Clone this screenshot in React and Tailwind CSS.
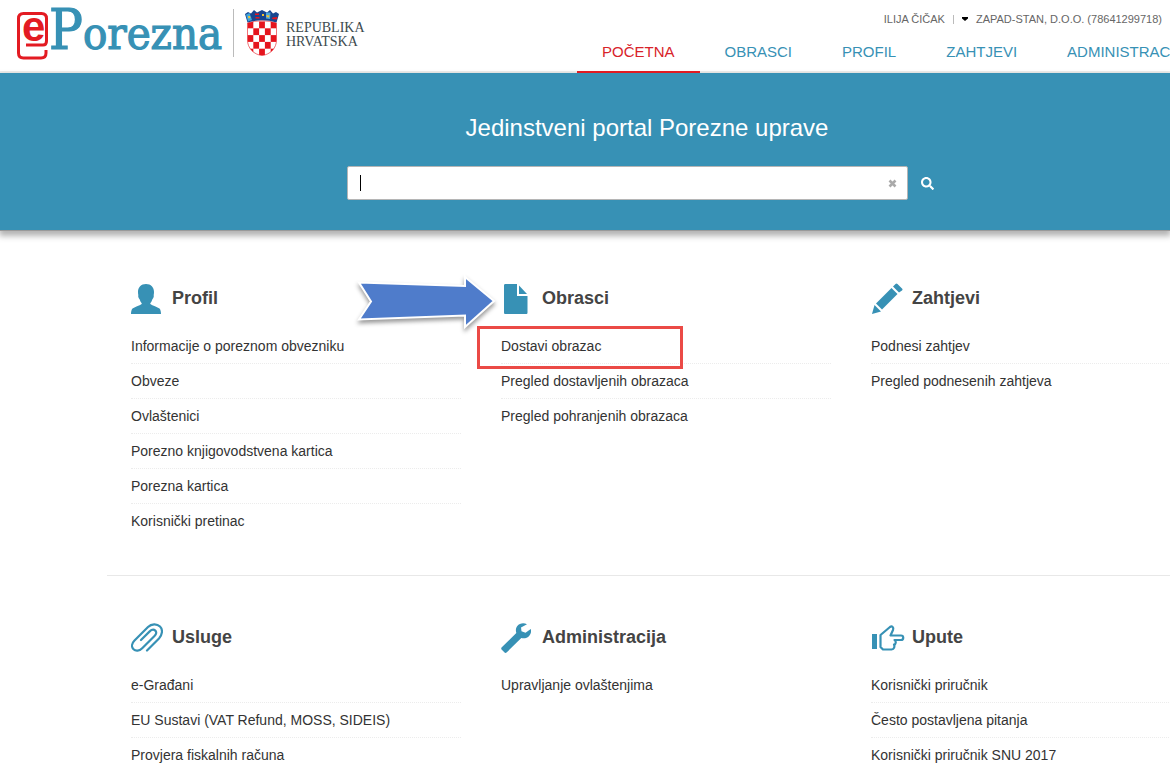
import { FaSearch } from "react-icons/fa";

const NAV = ["POČETNA", "OBRASCI", "PROFIL", "ZAHTJEVI", "ADMINISTRACIJA"];

function ProfileIcon() {
  return (
    <svg viewBox="0 0 30 30" className="h-[30px] w-[30px]" fill="currentColor" aria-hidden="true">
      <path d="M15 0c-5 0-8 3.400-8 8 0 1 .1 2 .3 3-.4 2 .5 3.500 1.300 4.200.6 2 1.400 3.200 2.100 4v.8C8.500 21.500 3.500 23 1.500 24.500.4 25.500 0 28 0 30h30c0-2-.4-4.500-1.500-5.500-2-1.500-7-3-9.200-4.500v-.8c.7-.8 1.500-2 2.100-4 .8-.7 1.700-2.200 1.300-4.200.2-1 .3-2 .3-3 0-4.600-3-8-8-8z" />
    </svg>
  );
}

function FileIcon() {
  return (
    <svg viewBox="0 0 30 30" className="h-[30px] w-[30px]" fill="currentColor" aria-hidden="true">
      <path d="M4.500 0H16v12h10.500v16.500c0 1-.5 1.500-1.500 1.500H4.500c-1 0-1.500-.5-1.500-1.500v-27C3 .5 3.500 0 4.500 0z" />
      <path d="M18 1.500v8.500h8z" />
    </svg>
  );
}

function PencilIcon() {
  return (
    <svg viewBox="0 0 32 32" className="h-8 w-8" fill="currentColor" aria-hidden="true">
      <path d="M1 31l2.500-9 6.500 6.500z" />
      <path d="M5 20.500L20.500 5l6 6L11 26.500z" />
      <path d="M22 3.500L24.500 1c.7-.7 1.300-.7 2 0l4.500 4.500c.7.700.7 1.300 0 2L28 9.500z" />
    </svg>
  );
}

function ClipIcon() {
  return (
    <svg viewBox="0 0 32 32" className="h-8 w-8" fill="none" stroke="currentColor" strokeWidth="2.200" strokeLinecap="round" strokeLinejoin="round" aria-hidden="true">
      <path d="M16 28.500L28 16.500C31.500 12.500 32 7.500 29 4.500S20.500 1.500 17 5L3.500 18.500c-3 3-3.200 6.500-1 8.700s5.700 2 8.700-1L23.500 14c2-2 2.200-4 .8-5.400s-3.600-1.200-5.600.8L10 18" />
    </svg>
  );
}

function WrenchIcon() {
  return (
    <svg viewBox="0 0 30 30" className="h-[30px] w-[30px]" fill="currentColor" aria-hidden="true">
      <path d="M26 1.200C22.500-.6 18.500.2 16.300 3c-1.500 2-1.800 4.500-1 6.900L.8 24.300c-.8.800-.8 1.700 0 2.500l2.500 2.500c.8.800 1.700.8 2.500 0L20.300 15c3 .8 6 0 8-2.300 1.700-2 2.200-4.500 1.500-6.700l-5.300 3.800-4-1.500-.5-3.800z" />
    </svg>
  );
}

function HandIcon() {
  return (
    <svg viewBox="0 0 34 28" className="h-7 w-[34px]" fill="none" stroke="currentColor" strokeWidth="2.200" strokeLinejoin="round" aria-hidden="true">
      <path d="M1 10h5v15H1z" fill="currentColor" stroke="none" />
      <path d="M9.500 11L19 3c2-1.500 4 .5 3 3L19.500 11.500H30c3 0 3 4.500 0 4.500h-6.500c2 1 1.500 4.500-.5 4.700 1 1.500.3 4.500-2.500 4.800H12L9.500 23z" />
    </svg>
  );
}

const SECTIONS = [
  [
    {
      title: "Profil",
      Icon: ProfileIcon,
      items: ["Informacije o poreznom obvezniku", "Obveze", "Ovlaštenici", "Porezno knjigovodstvena kartica", "Porezna kartica", "Korisnički pretinac"],
    },
    {
      title: "Obrasci",
      Icon: FileIcon,
      marked: true,
      items: ["Dostavi obrazac", "Pregled dostavljenih obrazaca", "Pregled pohranjenih obrazaca"],
    },
    { title: "Zahtjevi", Icon: PencilIcon, items: ["Podnesi zahtjev", "Pregled podnesenih zahtjeva"] },
  ],
  [
    { title: "Usluge", Icon: ClipIcon, items: ["e-Građani", "EU Sustavi (VAT Refund, MOSS, SIDEIS)", "Provjera fiskalnih računa"] },
    { title: "Administracija", Icon: WrenchIcon, items: ["Upravljanje ovlaštenjima"] },
    { title: "Upute", Icon: HandIcon, items: ["Korisnički priručnik", "Često postavljena pitanja", "Korisnički priručnik SNU 2017"] },
  ],
];

function Logo() {
  return (
    <a href="#" aria-label="ePorezna" className="block">
      <svg viewBox="0 0 206 60" className="h-[60px] w-[206px] overflow-visible">
        <path d="M10 45h17c2.500 0 3.500-1.500 3.500-4V18.500c0-3.500-1.700-5-5-5h-18c-3.300 0-5 1.500-5 5V53c0 3.500 1.700 5 5 5h17.500c3.300 0 5-1.500 5-5v-3" fill="none" stroke="#e31b22" strokeWidth="3" />
        <text x="6" y="41" fontSize="42" fontWeight="bold" fill="#e31b22" fontFamily="Liberation Sans Narrow, Liberation Sans, sans-serif">e</text>
        <text x="33" y="49" fill="#3791b5" stroke="#3791b5" strokeWidth="1.200" fontFamily="DejaVu Serif Condensed, DejaVu Serif, serif" fontSize="56">
          P<tspan fontSize="45">orezna</tspan>
        </text>
      </svg>
    </a>
  );
}

function CoatOfArms() {
  const cells = [];
  for (let r = 0; r < 5; r++) for (let c = 0; c < 5; c++) if ((r + c) % 2 === 0) cells.push([c, r]);
  return (
    <svg viewBox="0 0 36 48" className="h-12 w-9" aria-hidden="true">
      <clipPath id="shield">
        <path d="M3.500 14Q18 9.500 32.500 14V31c0 8-6 14.500-14.500 15.500C9.500 45.500 3.500 39 3.500 31z" />
      </clipPath>
      <g clipPath="url(#shield)">
        <path d="M0 9h36v39H0z" fill="#fff" />
        {cells.map(([c, r]) => (
          <rect key={`${c}-${r}`} x={3.5 + c * 5.8} y={12.5 + r * 6.800} width="5.800" height="6.800" fill="#e5141d" />
        ))}
      </g>
      <path d="M3.500 14Q18 9.500 32.500 14V31c0 8-6 14.500-14.500 15.500C9.500 45.500 3.500 39 3.500 31z" fill="none" stroke="#e5141d" strokeWidth=".6" />
      <path d="M3.500 13.500L1 5l3-2 3 1.500L10 1l3 2.500L18 1l5 2.500L26 1l3 3.500L32 3l3 2-2.500 8.500Q18 9 3.500 13.500z" fill="#17458f" />
      <path d="M2 5.500l3.500-1.500 2.500 7-4 1.500z" fill="#3ca4dc" />
      <path d="M11 4.500h4v1.500h-4zM11.500 8h4v1.500h-4z" fill="#e5141d" />
      <path d="M22 3.500h4.500l-.5 6.500-4-.6z" fill="#4aa7dc" />
      <path d="M18 5h2v2h-2zM22.500 6l3 .5-.5 2-2.500-.5zM4 7l2 0 .5 2-2 .5z" fill="#f2c230" />
      <path d="M28.500 8.500l5-.5-1 2.500-4.500-.5z" fill="#e5141d" />
    </svg>
  );
}

function ArrowCallout() {
  return (
    <svg viewBox="0 0 146 64" className="pointer-events-none absolute -left-[148px] -top-3 h-16 w-[146px] overflow-visible drop-shadow-[0_3px_2px_rgba(0,0,0,0.4)]" aria-hidden="true">
      <path d="M6 12.500L112 16V7l29 24-29 26V45.500L6 49.500l12-18z" fill="#4f7ccb" stroke="#fff" strokeWidth="2" />
    </svg>
  );
}

function Section({ title, Icon, items, marked }) {
  return (
    <section className="relative w-[330px] shrink-0">
      <div className="relative flex h-8 items-center">
        <span className="flex w-[41px] shrink-0 items-center pt-px text-[#3791b5]"><Icon /></span>
        <h2 className="text-lg font-bold leading-6 text-[#444]">{title}</h2>
        {marked && <ArrowCallout />}
      </div>
      <ul className="pt-[15px]">
        {items.map((t, i) => (
          <li key={t} className="relative border-b border-dotted border-[#ececec] last:border-transparent">
            <a href="#" className="block py-[7px] text-sm leading-5 text-[#333]">{t}</a>
            {marked && i === 0 && <span className="pointer-events-none absolute -left-6 -top-[3px] h-[43px] w-[206px] border-3 border-[#eb4a46]" />}
          </li>
        ))}
      </ul>
    </section>
  );
}

export default function App() {
  return (
    <div className="min-h-screen overflow-hidden bg-white font-['Liberation_Sans',Arial,sans-serif]">
      <header className="flex justify-between border-b-2 border-[#ededeb]">
        <div className="flex h-[71px] shrink-0 pl-4">
          <Logo />
          <div className="ml-[11px] mt-[9px] h-12 w-px bg-[#bbb]" />
          <div className="ml-[10px] mt-[9px]"><CoatOfArms /></div>
          <p className="ml-[6px] mt-[21px] font-['Liberation_Serif',serif] text-sm leading-[14px] text-[#3c4a4e]">REPUBLIKA<br />HRVATSKA</p>
        </div>
        <div className="flex w-[593px] shrink-0 flex-col">
          <div className="flex h-8 items-center justify-end gap-2 pr-2 pt-[6px] text-[11px] text-[#666]">
            <span>ILIJA ČIČAK</span>
            <span className="h-[9px] w-px bg-[#bbb]" />
            <button type="button" className="flex items-center gap-2">
              <svg viewBox="0 0 6 4" className="h-1 w-[6px]" aria-hidden="true"><path d="M0 0h6v1.500L3 4 0 1.500z" fill="#000" /></svg>
              ZAPAD-STAN, D.O.O. (78641299718)
            </button>
          </div>
          <nav className="relative z-10 -mb-[2px] flex h-[41px]">
            {NAV.map((n, i) => (
              <a key={n} href="#" className={i === 0 ? "shrink-0 border-b-2 border-[#e01b22] px-[25px] pt-2 text-[15px] leading-6 text-[#d8232a]" : "shrink-0 px-[25px] pt-2 text-[15px] leading-6 text-[#3791b5]"}>{n}</a>
            ))}
          </nav>
        </div>
      </header>

      <div className="flex h-[158px] flex-col items-center border-b border-[#999] bg-[#3791b5] pl-[124px] pt-[39px] shadow-[0_4px_6px_1px_rgba(0,0,0,0.3)]">
        <h1 className="text-2xl leading-8 text-white">Jedinstveni portal Porezne uprave</h1>
        <form className="mr-[14px] mt-[22px] flex items-center">
          <div className="relative">
            <input aria-label="Pretraživanje" type="text" className="block h-[34px] w-[561px] rounded-xs border border-[#b5b5b5] bg-white px-3 text-base caret-black outline-none" />
            <span className="pointer-events-none absolute left-[13px] top-[9px] h-4 w-px bg-black" />
            <button type="reset" aria-label="Obriši" className="absolute right-[11px] top-[13px] text-[#aaa]">
              <svg viewBox="0 0 9 9" className="block h-[9px] w-[9px]"><path d="M1.500 1.500l6 6M7.500 1.500l-6 6" stroke="currentColor" strokeWidth="2.600" /></svg>
            </button>
          </div>
          <button type="submit" aria-label="Traži" className="ml-[13px] text-white"><FaSearch size={13} /></button>
        </form>
      </div>

      <main className="pl-[107px]">
        {SECTIONS.map((row, i) => (
          <div key={i} className={i === 0 ? "flex gap-10 pb-9 pl-6 pt-[51px]" : "flex gap-10 border-t border-[#e8e8e8] pl-6 pt-[45px]"}>
            {row.map((s) => <Section key={s.title} {...s} />)}
          </div>
        ))}
      </main>
    </div>
  );
}
